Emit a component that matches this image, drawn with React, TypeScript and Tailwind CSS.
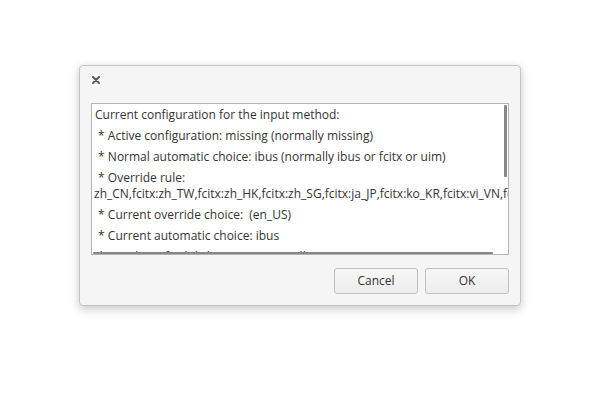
import React from 'react';

const lines: string[][] = [
    ['Current configuration for the input method:'],
    [' * Active configuration: missing (normally missing)'],
    [' * Normal automatic choice: ibus (normally ibus or fcitx or uim)'],
    [' * Override rule:', 'zh_CN,fcitx:zh_TW,fcitx:zh_HK,fcitx:zh_SG,fcitx:ja_JP,fcitx:ko_KR,fcitx:vi_VN,fcitx'],
    [' * Current override choice:  (en_US)'],
    [' * Current automatic choice: ibus'],
    [' * Number of valid choices: 2 (normally 1)'],
];

const App: React.FC = () => {
    return (
        <div
            className="w-[600px] h-[400px] bg-white pt-[65px] pl-[79px]"
            style={{ fontFamily: '"Open Sans", "Noto Sans", sans-serif' }}
        >
            <div className="w-[442px] h-[241px] bg-[#f5f5f5] border border-[#c2c2c2] rounded-[4px] shadow-[0_3px_10px_rgba(0,0,0,0.22)] flex flex-col px-[11px]">
                {/* header */}
                <div className="h-[37px] flex items-start pt-[9px] pl-[1px]">
                    <svg width="8" height="8" viewBox="0 0 8 8" className="mt-[1px]">
                        <path d="M1 1 L7 7 M7 1 L1 7" stroke="#5a5a5a" strokeWidth="2" strokeLinecap="round" />
                    </svg>
                </div>

                {/* text view */}
                <div className="relative w-[418px] h-[152px] bg-white border border-[#b4b4b4] overflow-hidden">
                    <div className="pt-[3px] pl-[3px] text-[12px] leading-[16px] text-[#333333] whitespace-pre">
                        {lines.map((para, i) => (
                            <div key={i} className="mb-[5px]">
                                {para.map((l, j) => (
                                    <div key={j} className={j === 1 ? '-ml-[1px]' : ''}>{l}</div>
                                ))}
                            </div>
                        ))}
                    </div>
                    {/* overlay scrollbars */}
                    <div className="absolute left-[412px] top-[1px] w-[3px] h-[72px] bg-[#888888] rounded-[1px]" />
                    <div className="absolute left-[1px] top-[148px] w-[400px] h-[3px] bg-[#888888] rounded-[1px]" />
                </div>

                {/* buttons */}
                <div className="flex justify-end gap-[7px] mt-[13px]">
                    <button className="w-[84px] h-[26px] rounded-[3px] border border-[#c0c0c0] bg-[linear-gradient(to_bottom,#f7f7f7,#ededed)] text-[12px] text-[#333333]">
                        Cancel
                    </button>
                    <button className="w-[84px] h-[26px] rounded-[3px] border border-[#c0c0c0] bg-[linear-gradient(to_bottom,#f7f7f7,#ededed)] text-[12px] text-[#333333]">
                        OK
                    </button>
                </div>
            </div>
        </div>
    );
};

export default App;
